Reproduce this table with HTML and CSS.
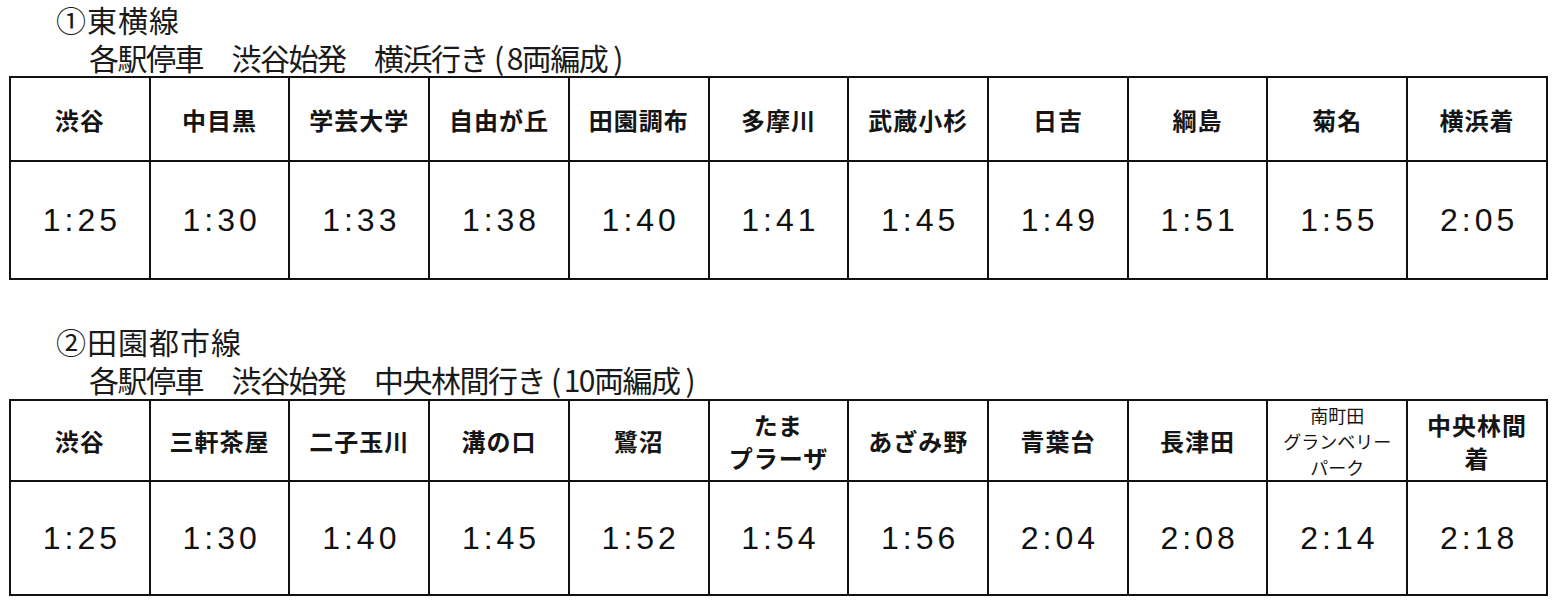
FILE: index.html
```html
<!DOCTYPE html>
<html lang="ja">
<head>
<meta charset="utf-8">
<link rel="stylesheet" href="styles.css">
</head>
<body>
<section class="line first">
  <div class="line-title">①東横線</div>
  <div class="line-sub">各駅停車　渋谷始発　横浜行き<span class="po">(</span>8両編成<span class="pc">)</span></div>
  <table class="tt t1">
    <tr class="names">
      <th>渋谷</th><th>中目黒</th><th>学芸大学</th><th>自由が丘</th><th>田園調布</th><th>多摩川</th><th>武蔵小杉</th><th>日吉</th><th>綱島</th><th>菊名</th><th>横浜着</th>
    </tr>
    <tr class="times">
      <td>1:25</td><td>1:30</td><td>1:33</td><td>1:38</td><td>1:40</td><td>1:41</td><td>1:45</td><td>1:49</td><td>1:51</td><td>1:55</td><td>2:05</td>
    </tr>
  </table>
</section>
<section class="line second">
  <div class="line-title">②田園都市線</div>
  <div class="line-sub">各駅停車　渋谷始発　中央林間行き<span class="po">(</span>10両編成<span class="pc">)</span></div>
  <table class="tt t2">
    <tr class="names">
      <th>渋谷</th><th>三軒茶屋</th><th>二子玉川</th><th>溝の口</th><th>鷺沼</th><th class="two">たま<br>プラーザ</th><th>あざみ野</th><th>青葉台</th><th>長津田</th><th class="small">南町田<br>グランベリー<br>パーク</th><th class="two">中央林間<br>着</th>
    </tr>
    <tr class="times">
      <td>1:25</td><td>1:30</td><td>1:40</td><td>1:45</td><td>1:52</td><td>1:54</td><td>1:56</td><td>2:04</td><td>2:08</td><td>2:14</td><td>2:18</td>
    </tr>
  </table>
</section>
</body>
</html>
```
FILE: styles.css
```css
html, body {
  margin: 0;
  padding: 0;
  background: #ffffff;
}
body {
  width: 1560px;
  height: 605px;
  overflow: hidden;
  font-family: "Noto Sans CJK JP", "Noto Sans", sans-serif;
  color: #111;
}
.line-title {
  padding-left: 56px;
  font-size: 30px;
  line-height: 38px;
  height: 38px;
  letter-spacing: 1px;
  color: #1a1a1a;
}
.line-sub {
  padding-left: 89px;
  font-size: 30px;
  line-height: 38px;
  height: 38px;
  letter-spacing: -1.5px;
  color: #1a1a1a;
}
.line-sub .po {
  margin: 0 4px 0 6px;
}
.line-sub .pc {
  margin-left: 6px;
}
.second {
  margin-top: 42px;
}
.second .line-sub {
  height: 39px;
}
.tt {
  margin-left: 9px;
  width: 1539px;
  table-layout: fixed;
  border-collapse: collapse;
}
.tt th, .tt td {
  border: 2px solid #111;
  text-align: center;
  vertical-align: middle;
  padding: 0;
}
.tt th {
  font-size: 24px;
  font-weight: 700;
  letter-spacing: 1px;
  color: #151515;
}
.t1 .names th { height: 82px; }
.t1 .times td { height: 116px; }
.t2 .names th { height: 79px; }
.t2 .times td { height: 112px; }
.tt th.two {
  line-height: 33px;
}
.tt th.small {
  font-size: 18px;
  font-weight: 400;
  line-height: 26px;
  letter-spacing: 0;
}
.tt td {
  font-family: "Liberation Sans", Arial, sans-serif;
  font-size: 32px;
  letter-spacing: 4px;
  padding-left: 4px;
  color: #111;
}
```
